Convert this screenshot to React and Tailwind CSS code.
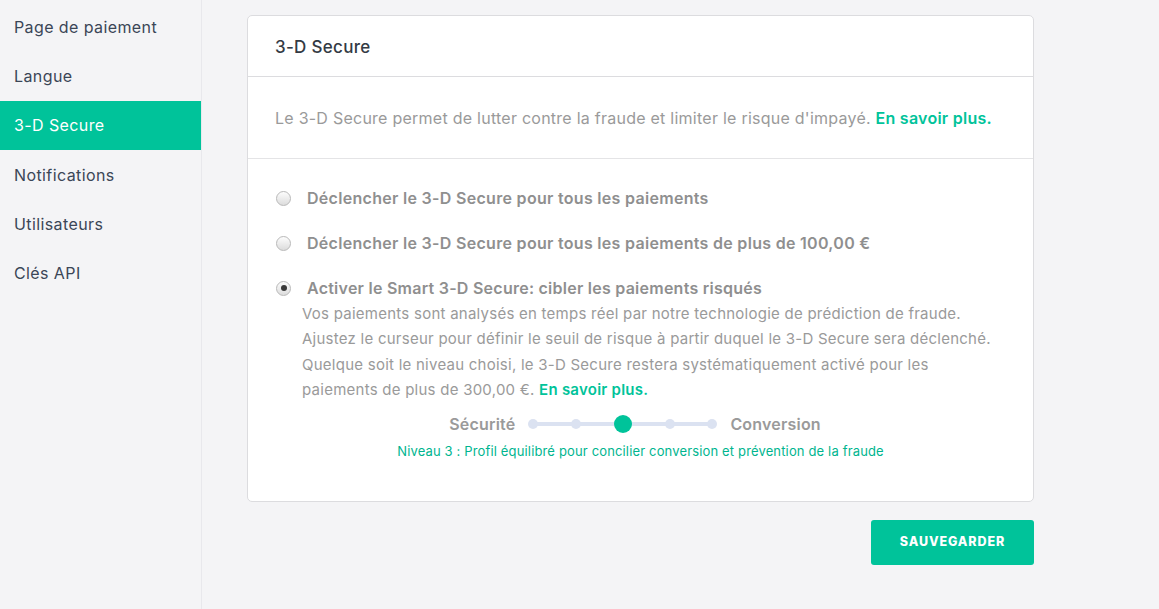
import React from "react";

const font = { fontFamily: "Inter, 'Open Sans', sans-serif" };

function Radio({ checked }) {
  return (
    <span className="relative inline-flex h-[15px] w-[15px] shrink-0 items-center justify-center rounded-full border border-[#b9b9b9] bg-gradient-to-b from-[#fdfdfd] to-[#dcdcdc]">
      {checked && <span className="h-[6px] w-[6px] rounded-full bg-[#3a3a3a]" />}
    </span>
  );
}

export default function App() {
  const items = ["Page de paiement", "Langue", "3-D Secure", "Notifications", "Utilisateurs", "Clés API"];
  return (
    <div className="flex h-[609px] w-[1159px] bg-[#f4f4f6]" style={font}>
      <aside className="w-[202px] shrink-0 border-r border-[#e8e8ec] bg-[#f4f4f6] pt-[2px]">
        {items.map((t) => (
          <div
            key={t}
            className={`flex h-[49.3px] items-center px-[14px] text-[16px] tracking-[0.4px] ${
              t === "3-D Secure" ? "bg-[#00c39a] text-white" : "text-[#3b4656]"
            }`}
          >
            {t}
          </div>
        ))}
      </aside>
      <main className="flex-1 pl-[45px] pt-[15px]">
        <div className="w-[787px] rounded-[5px] border border-[#dcdcdf] bg-white">
          <div className="flex h-[61px] items-center border-b border-[#dcdcdf] px-[27px] pt-[3px] text-[17px] font-medium tracking-[0.3px] text-[#333a44]">
            3-D Secure
          </div>
          <div className="flex h-[82px] items-center border-b border-[#e4e4e6] px-[27px] text-[16px] tracking-[0.25px] text-[#9a9a9a]">
            <span>
              Le 3-D Secure permet de lutter contre la fraude et limiter le risque d'impayé.{" "}
              <span className="font-semibold text-[#00c39a]">En savoir plus.</span>
            </span>
          </div>
          <div className="px-[27px] pb-[41px] pt-[27px] text-[#8f8f8f]">
            <div className="flex items-center gap-[16px] pl-[1px] text-[16px] leading-[24px] tracking-[0.3px]">
              <Radio />
              <span className="font-semibold">Déclencher le 3-D Secure pour tous les paiements</span>
            </div>
            <div className="mt-[21px] flex items-center gap-[16px] pl-[1px] text-[16px] leading-[24px] tracking-[0.3px]">
              <Radio />
              <span className="font-semibold">Déclencher le 3-D Secure pour tous les paiements de plus de 100,00 €</span>
            </div>
            <div className="mt-[21px] flex items-center gap-[16px] pl-[1px] text-[16px] leading-[24px] tracking-[0.25px]">
              <Radio checked />
              <span className="font-semibold">Activer le Smart 3-D Secure: cibler les paiements risqués</span>
            </div>
            <p className="ml-[27px] mt-[1px] text-[15px] leading-[25.3px] tracking-[0.25px] text-[#9a9a9a]">
              Vos paiements sont analysés en temps réel par notre technologie de prédiction de fraude.
              <br />
              Ajustez le curseur pour définir le seuil de risque à partir duquel le 3-D Secure sera déclenché.
              <br />
              Quelque soit le niveau choisi, le 3-D Secure restera systématiquement activé pour les
              <br />
              paiements de plus de 300,00 €. <span className="font-semibold text-[#00c39a]">En savoir plus.</span>
            </p>
            <div className="mt-[10px] flex flex-col items-center">
              <div className="flex items-center gap-[13px] pr-[11px] text-[16px] leading-[24px] tracking-[0.2px]">
                <span className="font-semibold text-[#9a9a9a]">Sécurité</span>
                <div className="relative flex h-[18px] w-[189px] items-center justify-between">
                  <div className="absolute left-[5px] right-[5px] top-[7px] h-[4px] bg-[#dbe2f1]" />
                  <span className="relative h-[10px] w-[10px] rounded-full bg-[#dbe2f1]" />
                  <span className="relative h-[10px] w-[10px] rounded-full bg-[#dbe2f1]" />
                  <span className="relative h-[18px] w-[18px] rounded-full bg-[#00c39a]" />
                  <span className="relative h-[10px] w-[10px] rounded-full bg-[#dbe2f1]" />
                  <span className="relative h-[10px] w-[10px] rounded-full bg-[#dbe2f1]" />
                </div>
                <span className="font-semibold text-[#9a9a9a]">Conversion</span>
              </div>
              <div className="mt-[6px] text-[13px] leading-[18px] tracking-[0.15px] text-[#00b58f]">
                Niveau 3 : Profil équilibré pour concilier conversion et prévention de la fraude
              </div>
            </div>
          </div>
        </div>
        <div className="flex w-[787px] justify-end pt-[18px]">
          <button className="flex h-[45px] w-[163px] items-center justify-center rounded-[3px] bg-[#00c39a] text-[12.5px] font-extrabold tracking-[0.9px] text-white">
            SAUVEGARDER
          </button>
        </div>
      </main>
    </div>
  );
}
